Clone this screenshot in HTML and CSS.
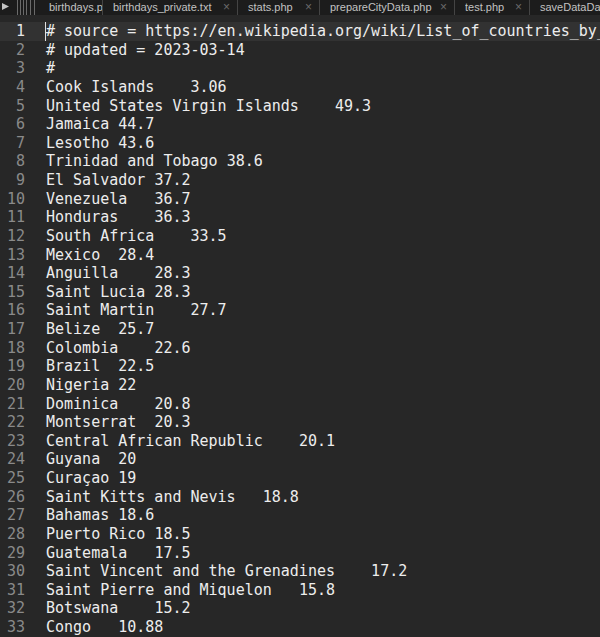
FILE: index.html
```html
<!DOCTYPE html>
<html>
<head>
<meta charset="utf-8">
<link rel="stylesheet" href="styles.css">
</head>
<body>
<div class="window">
  <div class="tabbar">
    <div class="tabctl">
      <svg width="46" height="15" viewBox="0 0 46 15">
        <polygon points="2,3 9,6.5 2,10" fill="#c4c4c4"/>
        <g stroke="#6a6a6a" stroke-width="1">
          <line x1="17.5" y1="0" x2="17.5" y2="15"/>
          <line x1="20.5" y1="0" x2="20.5" y2="15"/>
          <line x1="23.5" y1="0" x2="23.5" y2="15"/>
          <line x1="26.5" y1="0" x2="26.5" y2="15"/>
          <line x1="30.5" y1="0" x2="30.5" y2="15"/>
          <line x1="34.5" y1="0" x2="34.5" y2="15"/>
        </g>
      </svg>
    </div>
    <div class="tab first"><span class="name">birthdays.pl</span></div>
    <div class="tab"><span class="name">birthdays_private.txt</span><span class="close">×</span></div>
    <div class="tab"><span class="name">stats.php</span><span class="close">×</span></div>
    <div class="tab"><span class="name">prepareCityData.php</span><span class="close">×</span></div>
    <div class="tab"><span class="name">test.php</span><span class="close">×</span></div>
    <div class="tab last"><span class="name">saveDataDaily.php</span></div>
  </div>
  <div class="editor">
    <div class="gutter">
      <div class="ln cur">1</div><div class="ln">2</div><div class="ln">3</div><div class="ln">4</div><div class="ln">5</div><div class="ln">6</div><div class="ln">7</div><div class="ln">8</div><div class="ln">9</div><div class="ln">10</div><div class="ln">11</div><div class="ln">12</div><div class="ln">13</div><div class="ln">14</div><div class="ln">15</div><div class="ln">16</div><div class="ln">17</div><div class="ln">18</div><div class="ln">19</div><div class="ln">20</div><div class="ln">21</div><div class="ln">22</div><div class="ln">23</div><div class="ln">24</div><div class="ln">25</div><div class="ln">26</div><div class="ln">27</div><div class="ln">28</div><div class="ln">29</div><div class="ln">30</div><div class="ln">31</div><div class="ln">32</div><div class="ln">33</div>
    </div>
    <div class="code">
      <div class="line cur"><span class="caret"></span># source = https://en.wikipedia.org/wiki/List_of_countries_by_intentional_homicide_rate</div>
      <div class="line"># updated = 2023-03-14</div>
      <div class="line">#</div>
      <div class="line">Cook Islands	3.06</div>
      <div class="line">United States Virgin Islands	49.3</div>
      <div class="line">Jamaica	44.7</div>
      <div class="line">Lesotho	43.6</div>
      <div class="line">Trinidad and Tobago	38.6</div>
      <div class="line">El Salvador	37.2</div>
      <div class="line">Venezuela	36.7</div>
      <div class="line">Honduras	36.3</div>
      <div class="line">South Africa	33.5</div>
      <div class="line">Mexico	28.4</div>
      <div class="line">Anguilla	28.3</div>
      <div class="line">Saint Lucia	28.3</div>
      <div class="line">Saint Martin	27.7</div>
      <div class="line">Belize	25.7</div>
      <div class="line">Colombia	22.6</div>
      <div class="line">Brazil	22.5</div>
      <div class="line">Nigeria	22</div>
      <div class="line">Dominica	20.8</div>
      <div class="line">Montserrat	20.3</div>
      <div class="line">Central African Republic	20.1</div>
      <div class="line">Guyana	20</div>
      <div class="line">Curaçao	19</div>
      <div class="line">Saint Kitts and Nevis	18.8</div>
      <div class="line">Bahamas	18.6</div>
      <div class="line">Puerto Rico	18.5</div>
      <div class="line">Guatemala	17.5</div>
      <div class="line">Saint Vincent and the Grenadines	17.2</div>
      <div class="line">Saint Pierre and Miquelon	15.8</div>
      <div class="line">Botswana	15.2</div>
      <div class="line">Congo	10.88</div>
    </div>
  </div>
</div>
</body>
</html>
```
FILE: styles.css
```css
html, body {
  margin: 0;
  padding: 0;
  background: #272727;
}
.window {
  width: 600px;
  height: 637px;
  overflow: hidden;
  background: #272727;
  display: flex;
  flex-direction: column;
}
.tabbar {
  height: 15px;
  flex: none;
  background: #1c1c1c;
  display: grid;
  grid-template-columns: 49px 54px 135px 82px 135px 75px 1fr;
  font-family: "Liberation Sans", Arial, sans-serif;
  font-size: 11px;
  color: #c2c2c2;
  overflow: hidden;
  white-space: nowrap;
}
.tabctl {
  display: flex;
}
.tab {
  display: flex;
  align-items: center;
  padding: 0 0 0 10px;
  border-right: 1px solid #444;
  overflow: hidden;
  line-height: 15px;
}
.tab.first {
  padding-left: 0;
}
.tab.last {
  border-right: none;
}
.tab .name {
  flex: 1;
  overflow: hidden;
}
.tab .close {
  color: #6a6a6a;
  font-size: 12px;
  width: 14px;
  flex: none;
}
.editor {
  flex: 1;
  display: flex;
  padding-top: 7px;
  font-family: "DejaVu Sans Mono", Menlo, monospace;
  font-size: 15px;
  line-height: 18.625px;
  min-height: 0;
}
.gutter {
  width: 25px;
  flex: none;
  text-align: right;
  color: #8a8a8a;
}
.gutter .ln {
  height: 18.625px;
}
.gutter .ln.cur {
  color: #e6e6e6;
  background: #323232;
}
.code {
  flex: 1;
  color: #ededed;
  overflow: hidden;
}
.line {
  white-space: pre;
  tab-size: 4;
  -moz-tab-size: 4;
  padding-left: 21px;
  height: 18.625px;
}
.line.cur {
  background: #323232;
  position: relative;
}
.caret {
  position: absolute;
  left: 20px;
  top: 0;
  width: 1px;
  height: 18.625px;
  background: #e0e0e0;
}
```
